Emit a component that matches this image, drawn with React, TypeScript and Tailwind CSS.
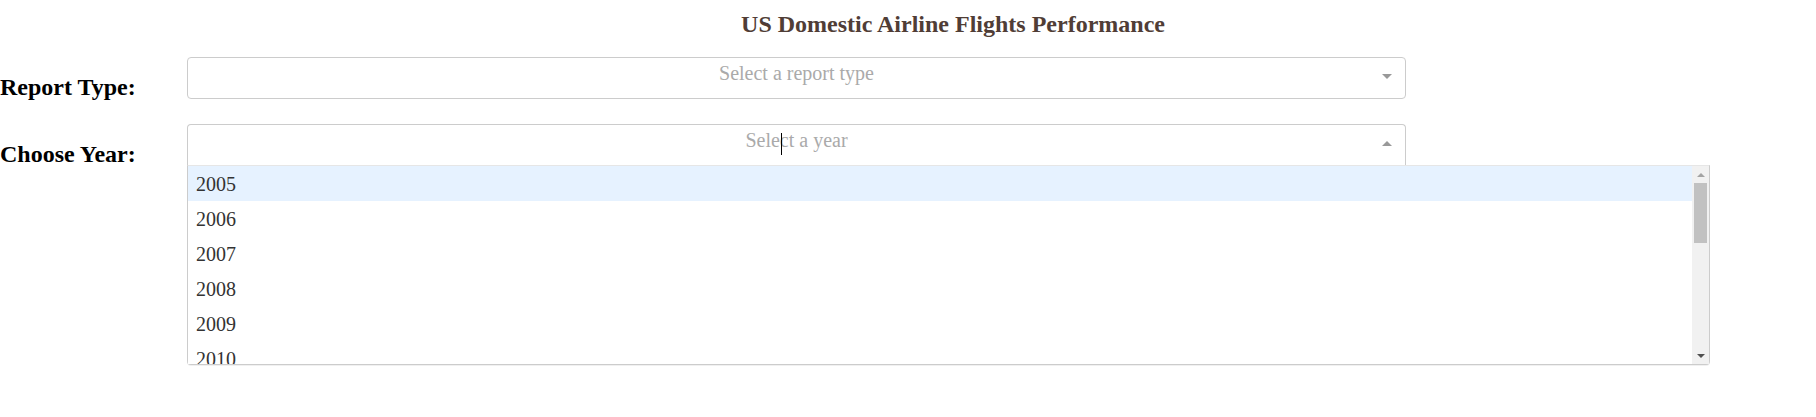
import React from "react";

const years = ["2005", "2006", "2007", "2008", "2009", "2010"];

function Row({ label, children }: { label: string; children: React.ReactNode }) {
  return (
    <div className="flex">
      <h2 className="my-[20px] w-[184px] shrink-0 text-[24px] font-bold leading-[27px] text-black">{label}</h2>
      <div className="w-[1225px] shrink-0 p-[3px]">{children}</div>
    </div>
  );
}

export default function App() {
  return (
    <div className="min-h-[417px] w-[1816px] bg-white font-['Liberation_Serif','Times_New_Roman',serif]">
      <h1 className="mb-[16px] pl-[90px] pt-[11px] text-center text-[24px] font-bold leading-[27px] text-[#503d36]">
        US Domestic Airline Flights Performance
      </h1>

      <Row label="Report Type:">
        <div className="relative h-[42px] rounded-[4px] border border-[#ccc] bg-white">
          <div className="absolute inset-x-0 top-0 text-center text-[20px] leading-[30px] text-[#aaa]">
            Select a report type
          </div>
          <span className="absolute right-[13px] top-[16px] h-0 w-0 border-x-[5px] border-t-[5px] border-x-transparent border-t-[#999]" />
        </div>
      </Row>

      <Row label="Choose Year:">
        <div className="relative h-[42px] rounded-t-[4px] border border-[#ccc] border-b-[#e6e6e6] bg-white">
          <div className="absolute inset-x-0 top-0 text-center text-[20px] leading-[30px] text-[#aaa]">
            Select a year
          </div>
          <span className="absolute left-[593px] top-[8px] h-[22px] w-px bg-black" />
          <span className="absolute right-[13px] top-[16px] h-0 w-0 border-x-[5px] border-b-[5px] border-x-transparent border-b-[#999]" />

          <div className="absolute left-[-1px] top-[40px] z-10 flex h-[200px] w-[1523px] rounded-b-[4px] border border-[#ccc] border-t-[#e6e6e6] bg-white shadow-[0_1px_0_rgba(0,0,0,0.06)]">
            <div className="flex-1 overflow-hidden">
              {years.map((y, i) => (
                <div
                  key={y}
                  className={`flex h-[35px] items-center px-[8px] text-[20px] text-[#333] ${i === 0 ? "bg-[#e6f2ff]" : "bg-white"}`}
                >
                  {y}
                </div>
              ))}
            </div>
            <div className="flex w-[17px] flex-col bg-[#f1f1f1]">
              <div className="flex h-[17px] items-center justify-center">
                <span className="h-0 w-0 border-x-[4px] border-b-[4px] border-x-transparent border-b-[#a3a3a3]" />
              </div>
              <div className="mx-[2px] h-[60px] bg-[#c1c1c1]" />
              <div className="flex-1" />
              <div className="flex h-[17px] items-center justify-center">
                <span className="h-0 w-0 border-x-[4px] border-t-[4px] border-x-transparent border-t-[#505050]" />
              </div>
            </div>
          </div>
        </div>
      </Row>
    </div>
  );
}
